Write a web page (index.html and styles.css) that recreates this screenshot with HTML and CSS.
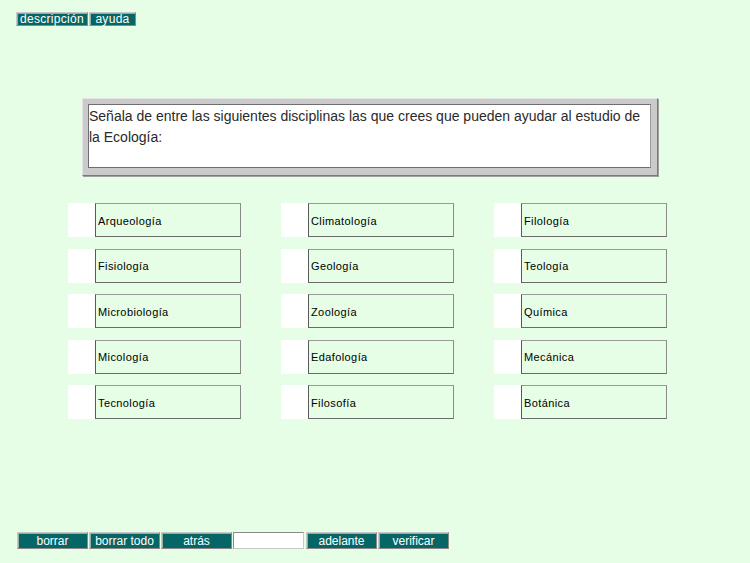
FILE: index.html
```html
<!DOCTYPE html>
<html lang="es">
<head>
<meta charset="utf-8">
<title>Ecología</title>
<link rel="stylesheet" href="styles.css">
</head>
<body>
<div class="page">
  <div class="topbar">
    <span class="btn btn-desc">descripción</span>
    <span class="btn btn-help">ayuda</span>
  </div>

  <div class="question">
    <div class="question-inner">Señala de entre las siguientes disciplinas las que crees que pueden ayudar al estudio de la Ecología:</div>
  </div>

  <div class="options">
    <div class="opt"><span class="chk"></span><span class="lbl">Arqueología</span></div>
    <div class="opt"><span class="chk"></span><span class="lbl">Climatología</span></div>
    <div class="opt"><span class="chk"></span><span class="lbl">Filología</span></div>
    <div class="opt"><span class="chk"></span><span class="lbl">Fisiología</span></div>
    <div class="opt"><span class="chk"></span><span class="lbl">Geología</span></div>
    <div class="opt"><span class="chk"></span><span class="lbl">Teología</span></div>
    <div class="opt"><span class="chk"></span><span class="lbl">Microbiología</span></div>
    <div class="opt"><span class="chk"></span><span class="lbl">Zoología</span></div>
    <div class="opt"><span class="chk"></span><span class="lbl">Química</span></div>
    <div class="opt"><span class="chk"></span><span class="lbl">Micología</span></div>
    <div class="opt"><span class="chk"></span><span class="lbl">Edafología</span></div>
    <div class="opt"><span class="chk"></span><span class="lbl">Mecánica</span></div>
    <div class="opt"><span class="chk"></span><span class="lbl">Tecnología</span></div>
    <div class="opt"><span class="chk"></span><span class="lbl">Filosofía</span></div>
    <div class="opt"><span class="chk"></span><span class="lbl">Botánica</span></div>
  </div>

  <div class="bottombar">
    <span class="btn btn-nav">borrar</span>
    <span class="btn btn-nav">borrar todo</span>
    <span class="btn btn-nav">atrás</span>
    <span class="field"></span>
    <span class="btn btn-nav">adelante</span>
    <span class="btn btn-nav">verificar</span>
  </div>
</div>
</body>
</html>
```

FILE: styles.css
```css
html, body {
  margin: 0;
  padding: 0;
  background: #e5fee5;
}

body {
  font-family: "Liberation Sans", Arial, sans-serif;
  width: 750px;
  height: 563px;
  overflow: hidden;
}

.page {
  display: flex;
  flex-direction: column;
}

.topbar {
  display: flex;
  gap: 1px;
  padding: 12px 0 0 16px;
}

.btn {
  box-sizing: border-box;
  display: flex;
  align-items: center;
  justify-content: center;
  background: #066666;
  color: #ffffff;
  font-size: 12px;
  line-height: 1;
  border: 1px solid;
  border-color: #c8c8c8 #8a8a8a #8a8a8a #c8c8c8;
  box-shadow: inset 1px 1px 0 #9aa8a8;
}

.btn-desc {
  width: 72px;
  height: 14px;
  letter-spacing: 0.3px;
}

.btn-help {
  width: 47px;
  height: 14px;
  letter-spacing: 0.3px;
}

.question {
  box-sizing: border-box;
  margin: 72px 0 0 82px;
  width: 576px;
  height: 78px;
  background: #cacaca;
  border: 1px solid;
  border-color: #e4e4e4 #7a7a7a #7a7a7a #e4e4e4;
  box-shadow: 1px 1px 0 #a0a0a0;
  padding: 5px 6px 7px 5px;
}

.question-inner {
  box-sizing: border-box;
  height: 100%;
  background: #ffffff;
  border: 1px solid;
  border-color: #6e6e6e #9a9a9a #6e6e6e #6e6e6e;
  padding: 1px 6px 0 0;
  font-size: 14px;
  line-height: 21px;
  color: #2a2a2a;
}

.options {
  display: grid;
  grid-template-columns: repeat(3, 173px);
  grid-auto-rows: 34px;
  column-gap: 40px;
  row-gap: 11.5px;
  margin: 27px 0 0 68px;
}

.opt {
  display: flex;
}

.chk {
  width: 27px;
  background: #ffffff;
}

.lbl {
  box-sizing: border-box;
  flex: 1;
  display: flex;
  align-items: center;
  padding: 1px 0 0 2px;
  font-size: 11px;
  letter-spacing: 0.4px;
  color: #000000;
  border: 1px solid;
  border-color: #9a9a9a #8a8a8a #6a6a6a #5a5a5a;
}

.bottombar {
  display: flex;
  gap: 1px;
  margin: 113px 0 0 17px;
}

.btn-nav {
  width: 71px;
  height: 17px;
}

.field {
  box-sizing: border-box;
  width: 71px;
  height: 17px;
  margin: 0 1px 0 0;
  background: #ffffff;
  border: 1px solid;
  border-color: #8a8a8a #c8c8c8 #c8c8c8 #8a8a8a;
}
```
